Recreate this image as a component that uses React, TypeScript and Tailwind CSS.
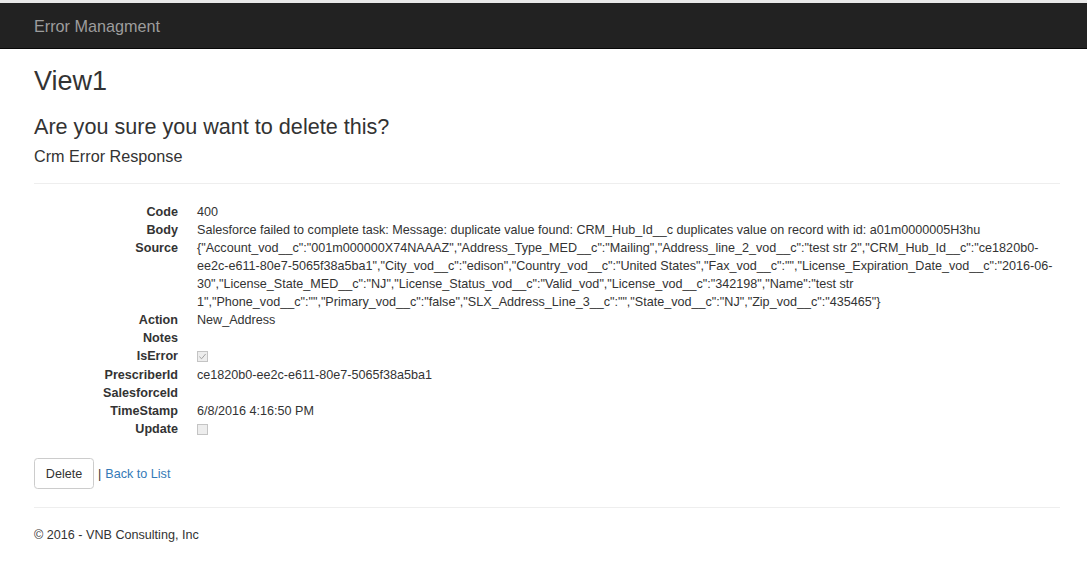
import React from 'react';

const sourceLines = [
  `{"Account_vod__c":"001m000000X74NAAAZ","Address_Type_MED__c":"Mailing","Address_line_2_vod__c":"test str 2","CRM_Hub_Id__c":"ce1820b0-`,
  `ee2c-e611-80e7-5065f38a5ba1","City_vod__c":"edison","Country_vod__c":"United States","Fax_vod__c":"","License_Expiration_Date_vod__c":"2016-06-`,
  `30","License_State_MED__c":"NJ","License_Status_vod__c":"Valid_vod","License_vod__c":"342198","Name":"test str`,
  `1","Phone_vod__c":"","Primary_vod__c":"false","SLX_Address_Line_3__c":"","State_vod__c":"NJ","Zip_vod__c":"435465"}`,
];

function Checkbox({ checked }: { checked?: boolean }) {
  return (
    <div className="h-[19px] flex items-center">
      <div className="w-[11px] h-[11px] border border-[#c4c4c4] bg-[#ededed] flex items-center justify-center">
        {checked && (
          <svg viewBox="0 0 10 10" className="w-[9px] h-[9px]">
            <path d="M1.5 5.2 L4 7.5 L8.5 2.2" fill="none" stroke="#9a9a9a" strokeWidth="1" />
          </svg>
        )}
      </div>
    </div>
  );
}

export default function App() {
  const rows: { label: string; value: React.ReactNode }[] = [
    { label: 'Code', value: '400' },
    { label: 'Body', value: 'Salesforce failed to complete task: Message: duplicate value found: CRM_Hub_Id__c duplicates value on record with id: a01m0000005H3hu' },
    {
      label: 'Source',
      value: (
        <>
          {sourceLines.map((l, i) => (
            <div key={i} className="whitespace-nowrap">{l}</div>
          ))}
        </>
      ),
    },
    { label: 'Action', value: 'New_Address' },
    { label: 'Notes', value: '' },
    { label: 'IsError', value: <Checkbox checked /> },
    { label: 'PrescriberId', value: 'ce1820b0-ee2c-e611-80e7-5065f38a5ba1' },
    { label: 'SalesforceId', value: '' },
    { label: 'TimeStamp', value: '6/8/2016 4:16:50 PM' },
    { label: 'Update', value: <Checkbox /> },
  ];

  return (
    <div className="min-h-[561px] bg-white text-[#333] text-[12.6px] leading-[18px]" style={{ fontFamily: '"Liberation Sans", Arial, sans-serif' }}>
      <div className="h-[3px] bg-[#e9e9e9]" />
      {/* Navbar */}
      <div className="h-[46px] bg-[#222] border-b border-[#080808] flex items-center pl-[34px]">
        <span className="text-[16.2px] text-[#9d9d9d] leading-[18px]">Error Managment</span>
      </div>

      <div className="pl-[34px] pr-[27px]">
        <h2 className="text-[27px] leading-[29.7px] mt-[18px] mb-[9px]">View1</h2>
        <h3 className="text-[21.6px] leading-[23.8px] mt-[18px] mb-[9px]">Are you sure you want to delete this?</h3>
        <div>
          <h4 className="text-[16.2px] leading-[17.8px] mt-[9px] mb-[9px]">Crm Error Response</h4>
          <hr className="border-t border-[#eee] mt-[18px] mb-[19px]" />
          <dl className="grid grid-cols-[144px_1fr] gap-x-[19px] mb-[19px]">
            {rows.map((r) => (
              <React.Fragment key={r.label}>
                <dt className="font-bold text-right whitespace-nowrap leading-[18px]">{r.label}</dt>
                <dd className="min-h-[18px]">{r.value}</dd>
              </React.Fragment>
            ))}
          </dl>
          <div className="flex items-center">
            <button className="h-[31px] px-[10.8px] border border-[#ccc] rounded-[3.6px] bg-white text-[#333] text-[12.6px]">Delete</button>
            <span className="ml-[4px]">|</span>
            <a className="ml-[4px] text-[#337ab7]" href="#">Back to List</a>
          </div>
        </div>
        <hr className="border-t border-[#eee] mt-[18px] mb-[18px]" />
        <footer>
          <p>© 2016 - VNB Consulting, Inc</p>
        </footer>
      </div>
    </div>
  );
}
